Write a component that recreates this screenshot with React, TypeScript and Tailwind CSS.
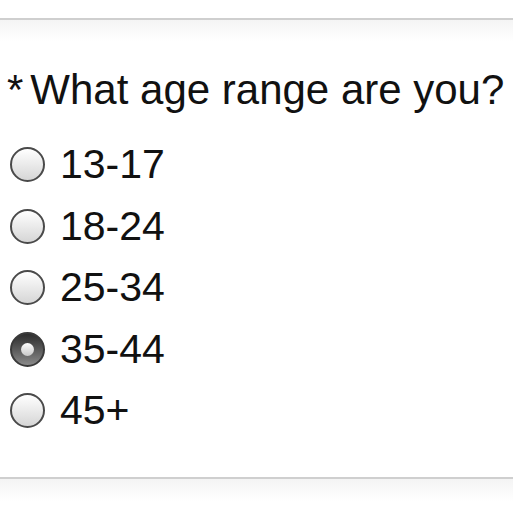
import { useState } from 'react';

const options = ['13-17', '18-24', '25-34', '35-44', '45+'];

function Radio({ checked }: { checked: boolean }) {
  if (checked) {
    return (
      <span className="flex h-[35px] w-[35px] shrink-0 items-center justify-center rounded-full border-2 border-[#3a3a3a] bg-gradient-to-b from-[#2e2e2e] to-[#8a8a8a]">
        <span className="h-[13px] w-[13px] rounded-full bg-gradient-to-b from-white to-[#c8c8c8]" />
      </span>
    );
  }
  return (
    <span className="h-[35px] w-[35px] shrink-0 rounded-full border-2 border-[#4a4a4a] bg-gradient-to-b from-white to-[#d6d6d6]" />
  );
}

export default function App() {
  const [selected, setSelected] = useState('35-44');

  return (
    <div className="h-[513px] w-[513px] overflow-hidden bg-white font-['Liberation_Sans',Arial,sans-serif] text-[#111]">
      <div className="h-[18px]" />
      <div className="h-[23px] border-t-2 border-[#cfcfcf] bg-gradient-to-b from-[#f4f4f4] to-white" />

      <div className="mt-[25px] flex h-[48px] pl-[7px] text-[42px] leading-[48px]">
        <span>*</span>
        <span className="ml-[7px]">What age range are you?</span>
      </div>

      <div className="mt-[20px] flex flex-col pl-[10px]">
        {options.map((opt) => (
          <button
            key={opt}
            onClick={() => setSelected(opt)}
            className="flex h-[61.5px] items-center gap-[15px] text-left"
          >
            <Radio checked={selected === opt} />
            <span className="text-[41px] leading-none">{opt}</span>
          </button>
        ))}
      </div>

      <div className="mt-[35px] h-[24px] border-t-2 border-[#cfcfcf] bg-gradient-to-b from-[#f4f4f4] to-white" />
    </div>
  );
}
